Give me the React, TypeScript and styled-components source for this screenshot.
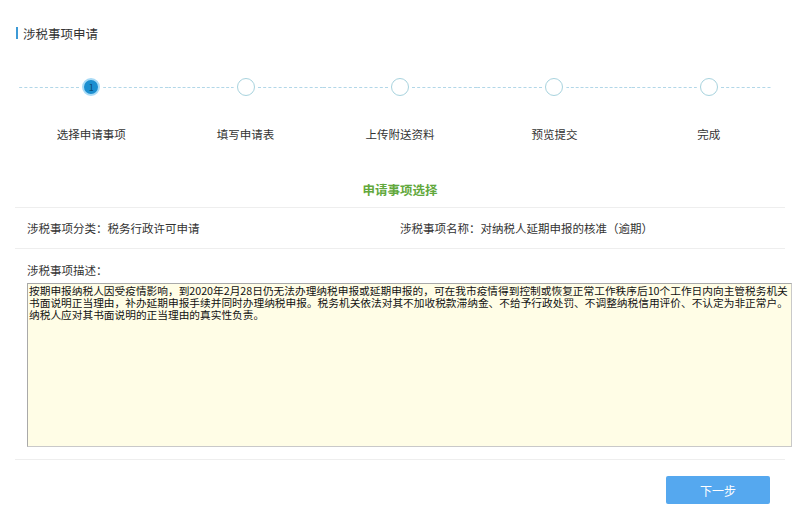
import * as React from "react";
import styled, { createGlobalStyle } from "styled-components";

const GlobalStyle = createGlobalStyle`
  html, body {
    margin: 0;
    padding: 0;
    background: #fff;
  }
  body {
    font-family: "Noto Sans CJK SC", "Noto Sans", sans-serif;
    color: #333;
  }
`;

const Page = styled.div`
  width: 800px;
  height: 516px;
  overflow: hidden;
`;

const Header = styled.div`
  display: flex;
  align-items: center;
  height: 20px;
  margin-top: 23px;
  padding-left: 16px;
  font-size: 12.5px;
  color: #333;
`;

const HeaderBar = styled.span`
  width: 2px;
  height: 12px;
  background: #3d9ad6;
  margin-right: 5px;
`;

const Steps = styled.div`
  display: grid;
  grid-template-columns: repeat(5, 1fr);
  margin: 35px 14px 0;
`;

const Step = styled.div`
  display: flex;
  flex-direction: column;
  align-items: center;
`;

const CircleRow = styled.div`
  display: flex;
  align-items: center;
  width: 100%;
  height: 18px;
`;

// the outer ends of the track stop a little short of the column edge
const Dash = styled.span<{ $cutLeft?: number; $cutRight?: number }>`
  flex: 1;
  height: 0;
  border-top: 1px dashed #b2d7e8;
  clip-path: inset(-1px ${(p) => p.$cutRight ?? 0}px -1px ${(p) => p.$cutLeft ?? 0}px);
`;

const Circle = styled.span<{ $active?: boolean }>`
  box-sizing: border-box;
  width: 18px;
  height: 18px;
  margin: 0 3px;
  border-radius: 50%;
  display: flex;
  align-items: center;
  justify-content: center;
  font-size: 9px;
  line-height: 1;
  color: #0b4a73;
  background: ${(p) => (p.$active ? "#1c8fd0" : "#fff")};
  border: ${(p) => (p.$active ? "2px solid #a9dbf6" : "1.5px solid #a8d3de")};
`;

const StepLabel = styled.div`
  margin-top: 30px;
  font-size: 11.5px;
  line-height: 16px;
  color: #333;
`;

const SectionTitle = styled.div`
  margin: 40px 15px 0;
  padding-bottom: 9px;
  border-bottom: 1px solid #eeeeee;
  text-align: center;
  font-size: 12.5px;
  line-height: 16px;
  font-weight: bold;
  color: #62a83c;
`;

const InfoRow = styled.div`
  display: grid;
  grid-template-columns: 1fr 1fr;
  align-items: center;
  height: 40px;
  margin: 0 15px;
  padding: 0 12px 0 12px;
  border-bottom: 1px solid #eeeeee;
  font-size: 11.5px;
  color: #333;
`;

const InfoCell = styled.div`
  white-space: nowrap;
`;

const DescLabel = styled.div`
  margin: 13px 27px 0;
  font-size: 11.5px;
  line-height: 16px;
  color: #333;
`;

const DescBox = styled.div`
  box-sizing: border-box;
  width: 765px;
  height: 164px;
  margin: 5px 0 0 27px;
  padding: 1px 1px;
  background: #fffde6;
  border: 1px solid #c9c9c9;
  border-top-color: #a9a9a9;
  border-left-color: #a9a9a9;
  font-size: 10.7px;
  line-height: 12px;
  color: #111;
  white-space: pre;
  overflow: hidden;
`;

const Footer = styled.div`
  display: flex;
  justify-content: flex-end;
  margin: 12px 15px 0;
  padding: 16px 15px 0 0;
  border-top: 1px solid #eeeeee;
`;

const NextButton = styled.button`
  width: 104px;
  height: 28px;
  border: none;
  border-radius: 2px;
  background: #55a8ef;
  color: #fff;
  font-family: inherit;
  font-size: 12px;
  cursor: pointer;
`;

const steps = ["选择申请事项", "填写申请表", "上传附送资料", "预览提交", "完成"];

const description = [
  "按期申报纳税人因受疫情影响，到2020年2月28日仍无法办理纳税申报或延期申报的，可在我市疫情得到控制或恢复正常工作秩序后10个工作日内向主管税务机关",
  "书面说明正当理由，补办延期申报手续并同时办理纳税申报。税务机关依法对其不加收税款滞纳金、不给予行政处罚、不调整纳税信用评价、不认定为非正常户。",
  "纳税人应对其书面说明的正当理由的真实性负责。",
].join("\n");

function App() {
  return (
    <Page>
      <GlobalStyle />
      <Header>
        <HeaderBar />
        涉税事项申请
      </Header>

      <Steps>
        {steps.map((label, i) => (
          <Step key={label}>
            <CircleRow>
              <Dash $cutLeft={i === 0 ? 4 : 0} />
              <Circle $active={i === 0}>{i === 0 ? "1" : ""}</Circle>
              <Dash $cutRight={i === steps.length - 1 ? 14 : 0} />
            </CircleRow>
            <StepLabel>{label}</StepLabel>
          </Step>
        ))}
      </Steps>

      <SectionTitle>申请事项选择</SectionTitle>

      <InfoRow>
        <InfoCell>涉税事项分类：税务行政许可申请</InfoCell>
        <InfoCell>涉税事项名称：对纳税人延期申报的核准（逾期）</InfoCell>
      </InfoRow>

      <DescLabel>涉税事项描述：</DescLabel>
      <DescBox>{description}</DescBox>

      <Footer>
        <NextButton type="button">下一步</NextButton>
      </Footer>
    </Page>
  );
}

export default App;
